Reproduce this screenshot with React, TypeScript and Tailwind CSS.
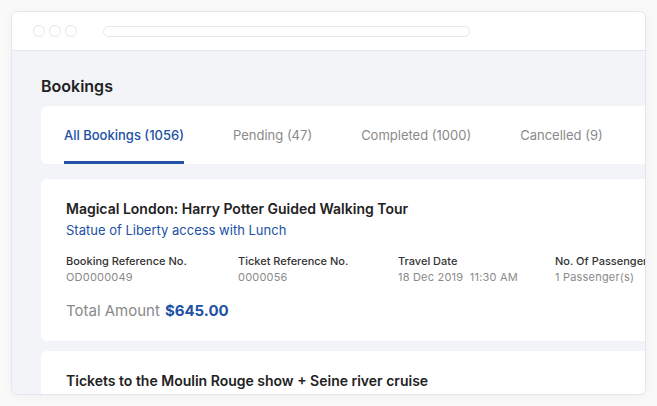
const TABS = [
  { label: 'All Bookings (1056)', active: true },
  { label: 'Pending (47)' },
  { label: 'Completed (1000)' },
  { label: 'Cancelled (9)' },
];

const FIELDS = [
  { label: 'Booking Reference No.', value: 'OD0000049', w: 'w-[172px]' },
  { label: 'Ticket Reference No.', value: '0000056', w: 'w-[160px]' },
  { label: 'Travel Date', value: '18 Dec 2019  11:30 AM', w: 'w-[157px]' },
  { label: 'No. Of Passengers', value: '1 Passenger(s)', w: 'w-[160px]' },
];

export default function App() {
  return (
    <div
      className="h-[406px] w-[657px] bg-[#f9f9fa] pt-[11px] pl-[11px] overflow-hidden"
      style={{ fontFamily: 'Inter, "Noto Sans", sans-serif' }}
    >
      <div className="w-[635px] h-[384px] rounded-[6px] border border-[#e3e6ec] bg-[#f3f4f7] overflow-hidden shadow-[0_2px_10px_rgba(0,0,0,0.04)] flex flex-col">
        {/* browser chrome */}
        <div className="h-[39px] shrink-0 bg-white border-b border-[#e3e6ec] flex items-center">
          <div className="flex gap-[4px] ml-[21px]">
            <span className="w-[12px] h-[12px] rounded-full border border-[#e3e6ec]" />
            <span className="w-[12px] h-[12px] rounded-full border border-[#e3e6ec]" />
            <span className="w-[12px] h-[12px] rounded-full border border-[#e3e6ec]" />
          </div>
          <div className="ml-[26px] w-[367px] h-[11px] rounded-full border border-[#e3e6ec]" />
        </div>

        {/* content */}
        <div className="pl-[29px] pt-[23px]">
          <h1 className="text-[16px] leading-[24px] font-semibold text-[#222]">Bookings</h1>

          <div className="mt-[8px] w-[640px] h-[58px] bg-white rounded-l-[6px] flex pl-[23px] gap-[49px]">
            {TABS.map((t) => (
              <div
                key={t.label}
                className={`flex items-center h-full pt-[4px] text-[13px] border-b-[3px] ${
                  t.active ? 'text-[#2151a5] font-medium border-[#2151a5]' : 'text-[#8a8a8a] border-transparent'
                }`}
              >
                {t.label}
              </div>
            ))}
          </div>

          <div className="mt-[15px] w-[640px] h-[162px] bg-white rounded-l-[6px] pl-[25px] pt-[20px]">
            <h2 className="text-[14px] leading-[20px] font-semibold text-[#222]">
              Magical London: Harry Potter Guided Walking Tour
            </h2>
            <p className="text-[13px] leading-[20px] text-[#2151a5] mt-[1px]">Statue of Liberty access with Lunch</p>
            <div className="flex mt-[14px] whitespace-nowrap">
              {FIELDS.map((f) => (
                <div key={f.label} className={`${f.w} shrink-0`}>
                  <p className="text-[11px] leading-[15px] font-medium text-[#333]">{f.label}</p>
                  <p className="text-[11px] leading-[15px] mt-[1px] text-[#8a8a8a] tracking-[0.2px] whitespace-pre">{f.value}</p>
                </div>
              ))}
            </div>
            <div className="flex items-baseline gap-[5px] mt-[15px]">
              <span className="text-[15px] text-[#8a8a8a]">Total Amount</span>
              <span className="text-[15px] font-bold text-[#2151a5]">$645.00</span>
            </div>
          </div>

          <div className="mt-[10px] w-[640px] h-[80px] bg-white rounded-l-[6px] pl-[25px] pt-[20px]">
            <h2 className="text-[14px] leading-[20px] font-semibold text-[#222]">
              Tickets to the Moulin Rouge show + Seine river cruise
            </h2>
          </div>
        </div>
      </div>
    </div>
  );
}
